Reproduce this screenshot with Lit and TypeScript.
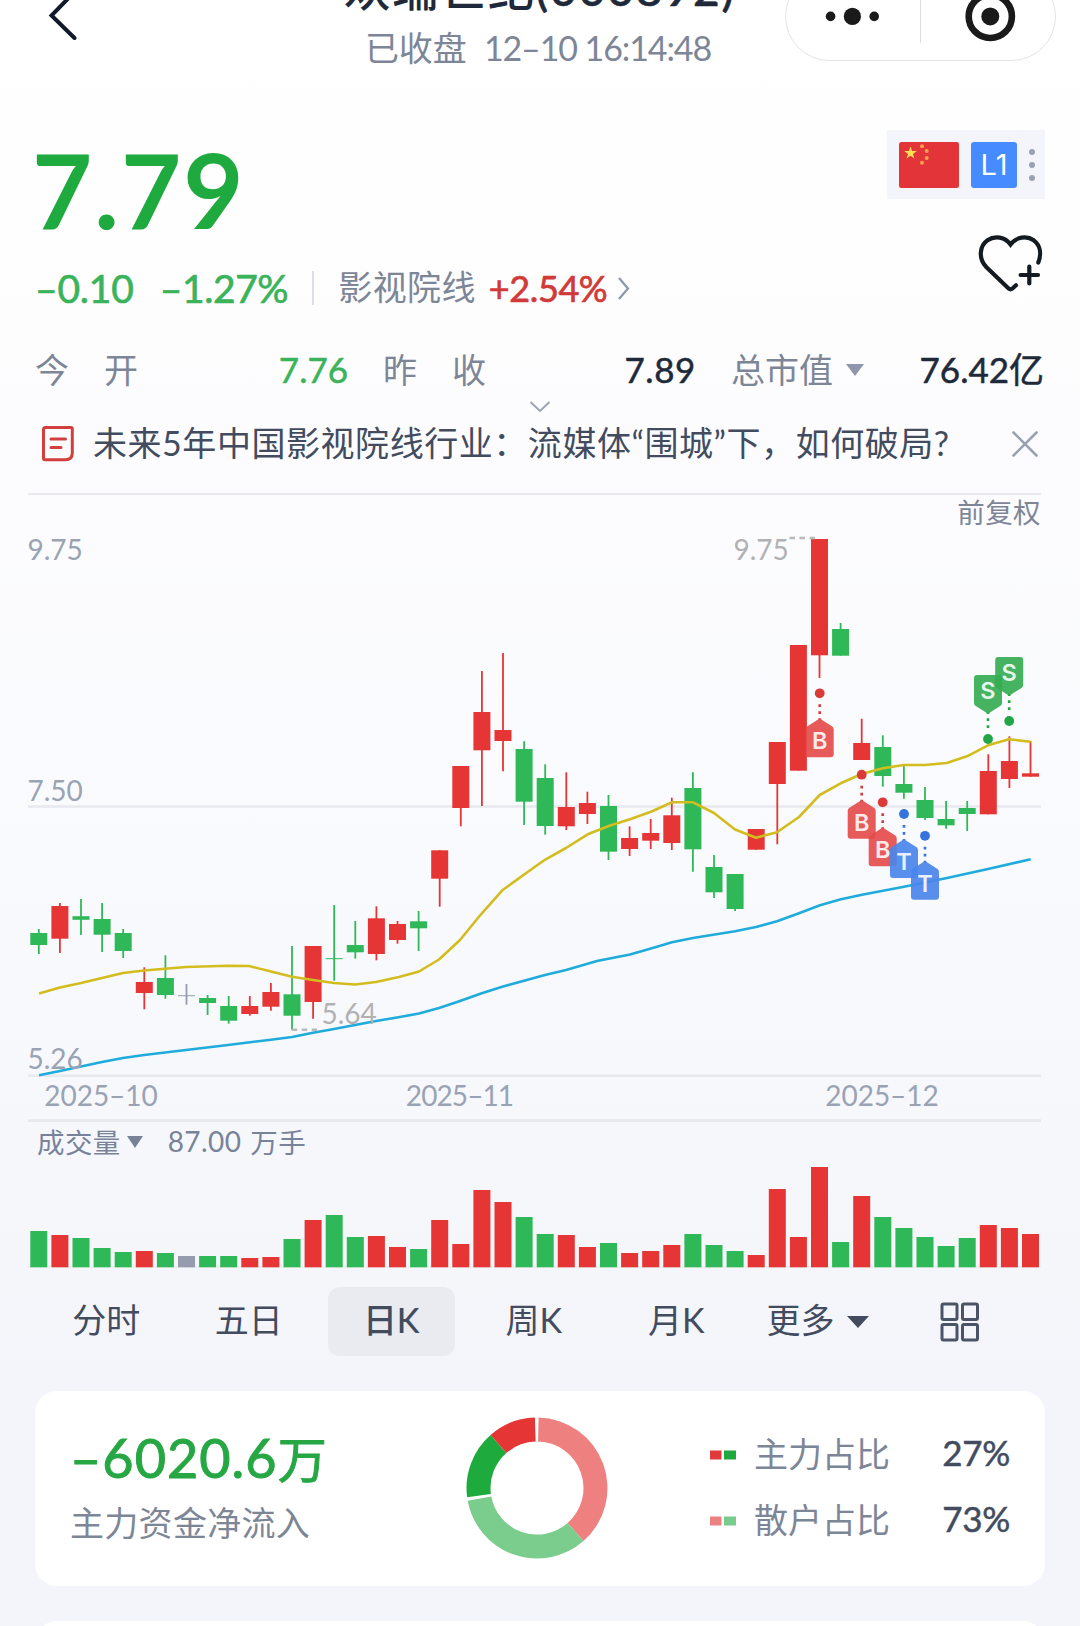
import { LitElement, html, svg, css } from "lit";
import { customElement } from "lit/decorators.js";

type Tone = "r" | "g" | "n";
/** tone, high, body top, body bottom, low, volume bar height */
type Candle = [Tone, number, number, number, number, number];

const RED = "#e53535";
const GREEN = "#2fb857";
const GREY = "#959cae";
const toneColor = (t: Tone) => (t === "r" ? RED : t === "g" ? GREEN : GREY);

const CANDLES: Candle[] = [
  ["g", 928, 932, 944, 953, 36],
  ["r", 902, 905, 937.7, 952, 32],
  ["g", 898, 915.2, 918.8, 934, 29],
  ["g", 902, 918, 933.7, 951, 19],
  ["g", 928, 932, 950, 957, 15],
  ["r", 966.3, 981, 992, 1008.3, 16],
  ["g", 954.3, 977, 994, 997.7, 14],
  ["n", 983, 994.2, 995.2, 1003.7, 11],
  ["g", 994, 997, 1002, 1014, 11],
  ["g", 995, 1005, 1019.7, 1022.7, 11],
  ["r", 995, 1005, 1013, 1014.7, 9],
  ["r", 982, 991, 1005.7, 1009.7, 10],
  ["g", 945, 993.3, 1014.7, 1028.7, 28],
  ["r", 945, 945, 1001, 1017.7, 47],
  ["g", 904, 957.2, 958.2, 979.7, 52],
  ["g", 920, 944, 951.3, 957.7, 30],
  ["r", 905.3, 917.3, 953, 959.3, 31],
  ["r", 920, 923, 939, 942.7, 20],
  ["g", 910, 920.3, 927.3, 950, 18],
  ["r", 849.3, 849.3, 877.7, 905.7, 47],
  ["r", 765, 765, 807, 825.3, 23],
  ["r", 670, 711, 749.3, 805, 77],
  ["r", 652, 729, 740, 770.3, 65],
  ["g", 740.3, 748, 800.7, 824, 50],
  ["g", 763.3, 777, 825, 833.7, 33],
  ["r", 771.3, 806, 825.3, 829, 32],
  ["r", 790.7, 802, 813, 823, 20],
  ["g", 794, 805, 850.7, 859, 24],
  ["r", 825.3, 837, 848, 855, 14],
  ["r", 818, 832, 839.7, 848, 16],
  ["r", 796.7, 814.3, 842, 849, 22],
  ["g", 771.3, 787, 848.3, 870.7, 33],
  ["g", 854, 866, 891.3, 897, 22],
  ["g", 873, 873, 908, 910, 16],
  ["r", 828, 828, 848.7, 848.7, 12],
  ["r", 741, 741, 783, 843.3, 78],
  ["r", 644, 644, 769.7, 769.7, 30],
  ["r", 538, 538, 654.3, 677, 100],
  ["g", 622, 628, 654.7, 654.7, 25],
  ["r", 717.7, 742, 759, 759, 71],
  ["g", 734.3, 746, 775, 785.7, 50],
  ["g", 764.3, 783, 791.7, 797.7, 39],
  ["g", 786, 799, 817, 819, 30],
  ["g", 800, 818, 824.3, 827.7, 21],
  ["g", 800, 807, 813, 830, 29],
  ["r", 753.3, 770, 813.3, 813.3, 42],
  ["r", 735.3, 760, 778, 787, 39],
  ["r", 740, 772.3, 775.7, 775.7, 33],
];

const FIRST_X = 38.8;
const STEP = 21.1;
const candleX = (i: number) => FIRST_X + i * STEP;

const MA_FAST =
  "39,992.5 60,986.5 81,982 102,977 123,972 144,969.5 186,966 228,964.7 249,965 271,970.5 292,975.7 313,979 334,982 355,983.5 376,981 399,976 419,970.5 439,958.5 460,939 481,913.3 502.3,889.3 535,865.7 545.7,858.3 566,847 587.7,833.3 608.7,825 630,818.3 651,810.7 672,801.3 693,801.3 714,812 735,828.5 756,836.7 777,831.3 799,816 819.7,794 840.7,782.3 861.7,773 882.7,767.3 904,764 925,764 946.7,762 967,755.3 988,744.3 1009,738.3 1030.7,740.7";
const MA_SLOW =
  "39,1074.3 60,1070 81,1065.5 102,1061 123,1057 144,1054 186,1049 228,1044 271,1038.7 292,1036 313,1031.7 334,1028 355,1024 376,1020 397,1016.5 419,1012.5 439,1007 460,1000 481,992.5 503,985.5 545,974 566,969 597,960 630,953.5 651,947.5 672,941.3 693,937 735,930.3 756,926 777,920.3 799,912.3 820,904.3 841,898.3 862,893.7 904,885.7 947,877 988,868 1030.7,858.3";

interface Marker {
  x: number;
  y: number;
  letter: "B" | "S" | "T";
}
const MARKERS: Marker[] = [
  { x: 819.7, y: 692.3, letter: "B" },
  { x: 861.7, y: 773.7, letter: "B" },
  { x: 882.7, y: 801.3, letter: "B" },
  { x: 904, y: 813, letter: "T" },
  { x: 925, y: 834.8, letter: "T" },
  { x: 988, y: 738, letter: "S" },
  { x: 1009.2, y: 720, letter: "S" },
];
const MARKER_COLORS = {
  B: ["#d93a3a", "#e54c4c"],
  T: ["#3673dc", "#4a85ec"],
  S: ["#22a544", "#35ad52"],
};

const base = css`
  :host {
    display: block;
    font-family: Lato, "Noto Sans CJK SC", sans-serif;
  }
  svg {
    display: block;
    flex: none;
  }
`;

@customElement("stock-header")
export class StockHeader extends LitElement {
  static styles = [
    base,
    css`
      .bar {
        display: grid;
        grid-template-columns: 290px 1fr 295px;
        height: 130px;
        overflow: hidden;
      }
      .back {
        margin-left: 45px;
      }
      .titles {
        text-align: center;
        white-space: nowrap;
      }
      .title {
        margin: -36px -5px 0 0;
        font-size: 46px;
        line-height: 50px;
        letter-spacing: 1.9px;
        font-weight: 500;
        color: #20293a;
      }
      .digits {
        -webkit-text-stroke: 0.6px currentColor;
      }
      .sub {
        margin: 14px -1px 0 0;
        font-size: 34px;
        line-height: 40px;
        color: #7d8697;
      }
      .date {
        margin-left: 17px;
        letter-spacing: -1.1px;
      }
      .capsule {
        box-sizing: border-box;
        width: 271px;
        height: 89px;
        margin-top: -28px;
        border: 1px solid #e4e4e6;
        border-radius: 45px;
        background: #fff;
      }
    `,
  ];
  render() {
    return html`<header class="bar">
      <svg class="back" width="40" height="44" viewBox="45 0 40 44">
        <path d="M74.5 -8 L51.5 15.5 L74.5 38" fill="none" stroke="#111a2b" stroke-width="4" stroke-linecap="round" />
      </svg>
      <div class="titles">
        <div class="title">欢瑞世纪<span class="digits">(000892)</span></div>
        <div class="sub">已收盘<span class="date">12–10 16:14:48</span></div>
      </div>
      <div class="capsule">
        <svg width="269" height="87" viewBox="786 -27 269 87">
          <g fill="#1a1a1a">
            <circle cx="830.6" cy="16.4" r="4.8" />
            <circle cx="852.4" cy="16.4" r="8.6" />
            <circle cx="874.2" cy="16.4" r="4.8" />
            <circle cx="990.3" cy="16.4" r="9" />
          </g>
          <path d="M920.5 -10V43" stroke="#dcdcde" stroke-width="1" />
          <circle cx="990.3" cy="16.4" r="21.6" fill="none" stroke="#1a1a1a" stroke-width="6.6" />
        </svg>
      </div>
    </header>`;
  }
}

@customElement("stock-quote")
export class StockQuote extends LitElement {
  static styles = [
    base,
    css`
      .quote {
        display: flex;
        justify-content: space-between;
        padding: 0 35px;
        height: 198px;
      }
      .price {
        margin-left: -3px;
        font-size: 104px;
        line-height: 117px;
        font-weight: 700;
        letter-spacing: 2px;
        color: #1eaa3e;
      }
      .change {
        display: flex;
        align-items: center;
        height: 81px;
        font-size: 39px;
        letter-spacing: -0.2px;
        -webkit-text-stroke: 0.7px currentColor;
        color: #3bb35b;
        white-space: nowrap;
      }
      .pct {
        margin-left: 26px;
        letter-spacing: -0.4px;
      }
      .divider {
        width: 2px;
        height: 34px;
        margin: 0 24px;
        background: #dcdfe5;
      }
      .sector {
        font-size: 34px;
        font-weight: 400;
        color: #7d8697;
        letter-spacing: 0.4px;
        line-height: 50px;
        padding-bottom: 2px;
        -webkit-text-stroke: 0;
      }
      .sector-pct {
        margin: 0 10px 0 13px;
        font-size: 36px;
        letter-spacing: -0.4px;
        color: #d03b39;
      }
      .side {
        display: flex;
        flex-direction: column;
        align-items: flex-end;
      }
      .badges {
        display: flex;
        align-items: center;
        gap: 12px;
        box-sizing: border-box;
        width: 158px;
        height: 69px;
        padding-left: 12px;
        background: #f4f5fa;
      }
      .level {
        width: 46px;
        height: 46px;
        border-radius: 3px;
        background: #468bff;
        color: #fff;
        font: 400 29px/46px Inter, sans-serif;
        text-align: center;
      }
      .heart {
        margin: 33px 0 0;
      }
      .stats {
        display: grid;
        grid-template-columns: 313px 313px 313px;
        column-gap: 35px;
        padding: 0 36px 0 35px;
        margin-top: 8px;
        font-size: 34px;
        line-height: 67px;
        color: #7d8697;
      }
      .stat {
        display: flex;
        justify-content: space-between;
        align-items: center;
        white-space: nowrap;
      }
      .wide {
        display: flex;
        gap: 35px;
      }
      .value {
        color: #20293a;
        -webkit-text-stroke: 0.5px currentColor;
        font-size: 35px;
      }
      .prev {
        letter-spacing: 0.6px;
      }
      .up {
        color: #3bb35b;
      }
      .cap {
        display: flex;
        align-items: center;
        gap: 13px;
      }
      .expand {
        margin: -2px auto 0;
      }
    `,
  ];
  render() {
    return html`
      <section class="quote">
        <div>
          <div class="price">7.79</div>
          <div class="change">
            <span>–0.10</span><span class="pct">–1.27%</span>
            <span class="divider"></span>
            <span class="sector">影视院线</span><span class="sector-pct">+2.54%</span>
            <svg width="14" height="26" viewBox="0 0 14 26">
              <path d="M2 3 L11 13.5 L2 24" fill="none" stroke="#8d96a6" stroke-width="2.2" />
            </svg>
          </div>
        </div>
        <div class="side">
          <div class="badges">
            <svg width="60" height="46" viewBox="899 141 60 46">
              <rect x="899" y="141" width="60" height="46" rx="2.5" fill="#e33539" />
              <path
                d="M910.5 145.6 l1.6 4.5 h4.7 l-3.8 2.8 1.4 4.6 -3.9 -2.7 -3.9 2.7 1.4 -4.6 -3.8 -2.8 h4.7z"
                fill="#ffdd55"
              />
              <g fill="#f5a04a">
                <circle cx="922" cy="145.3" r="2" />
                <circle cx="926.7" cy="150" r="2" />
                <circle cx="926.7" cy="157" r="2" />
                <circle cx="922" cy="161.7" r="2" />
              </g>
            </svg>
            <div class="level">L1</div>
            <svg width="8" height="34" viewBox="0 0 8 34">
              <g fill="#9aa1b1">
                <circle cx="3" cy="4" r="3" />
                <circle cx="3" cy="17" r="3" />
                <circle cx="3" cy="30" r="3" />
              </g>
            </svg>
          </div>
          <svg class="heart" width="68" height="62" viewBox="977 232 68 62">
            <g fill="none" stroke="#141a22" stroke-width="4.2" stroke-linecap="round">
              <path
                d="M1016 285.3 L1012.2 288.7 Q1010.5 290 1008.8 288.7 L986.5 267.3 C978 258.5 979.5 246 987.5 240.3 C995 235.2 1005 237 1010.5 244.5 C1016 237 1026.5 235.2 1033.8 240.3 C1040.5 245.4 1041.5 254 1038.3 262.5"
              />
              <path d="M1029.3 266.5v17M1020.6 275h17.4" />
            </g>
          </svg>
        </div>
      </section>
      <section class="stats">
        <div class="stat">
          <span class="wide"><span>今</span><span>开</span></span><span class="value up">7.76</span>
        </div>
        <div class="stat">
          <span class="wide"><span>昨</span><span>收</span></span><span class="value prev">7.89</span>
        </div>
        <div class="stat">
          <span class="cap"
            >总市值<svg width="18" height="12" viewBox="0 0 18 12"><path d="M0 0H18L9 12Z" fill="#8d96ab" /></svg></span
          ><span class="value">76.42亿</span>
        </div>
      </section>
      <svg class="expand" width="22" height="12" viewBox="0 0 22 12">
        <path d="M1.5 1 L11 10 L20.5 1" fill="none" stroke="#99a1b3" stroke-width="1.8" />
      </svg>
    `;
  }
}

@customElement("stock-news")
export class StockNews extends LitElement {
  static styles = [
    base,
    css`
      .news {
        display: flex;
        align-items: center;
        height: 62px;
        margin: 0 39px 0 28px;
        padding: 0 3px 18px 13px;
        border-bottom: 2px solid #e8eaee;
      }
      .text {
        flex: 1;
        margin-left: 18px;
        padding-bottom: 3px;
        font-size: 34px;
        line-height: 59px;
        letter-spacing: 0.55px;
        color: #424c5e;
        white-space: nowrap;
      }
    `,
  ];
  render() {
    return html`<div class="news">
      <svg width="34" height="38" viewBox="41 425 34 38">
        <g fill="none" stroke="#d33f3f" stroke-width="3" stroke-linecap="round">
          <path d="M45.5 427.5 H70.8 Q72.3 427.5 72.3 429 V453 Q72.3 459.7 65.5 459.7 H45 Q43.5 459.7 43.5 458.2 V429.5 Q43.5 427.5 45.5 427.5Z" />
          <path d="M51 439H65.5M51 447.5H61" />
        </g>
      </svg>
      <span class="text">未来5年中国影视院线行业：流媒体“围城”下，如何破局?</span>
      <svg width="26" height="26" viewBox="0 0 26 26">
        <path d="M1.5 1.5L24.5 24.5M24.5 1.5L1.5 24.5" stroke="#99a1b3" stroke-width="2.6" stroke-linecap="round" />
      </svg>
    </div>`;
  }
}

@customElement("kline-chart")
export class KlineChart extends LitElement {
  static styles = [
    base,
    css`
      .axis {
        font-size: 28px;
        fill: #9aa3b4;
      }
      .tight {
        letter-spacing: -0.9px;
      }
      .extreme {
        font-size: 28px;
        fill: #b1b1b3;
      }
      .adjust {
        font-size: 27.5px;
        fill: #7d8697;
        letter-spacing: 0.4px;
      }
      .letter {
        font: 600 23.5px Inter, "Liberation Sans", sans-serif;
        fill: #fff;
        fill-opacity: 0.88;
        text-anchor: middle;
      }
      .legend {
        display: flex;
        align-items: center;
        box-sizing: border-box;
        height: 39px;
        padding: 0 0 2px 37px;
        font-size: 27.5px;
        letter-spacing: 0.4px;
        color: #78839a;
      }
      .arrow {
        margin: 3px 25px 0 6px;
      }
      .vol {
        font-size: 28px;
      }
      .unit {
        margin-left: 9px;
      }
    `,
  ];

  private candle([tone, high, top, bottom, low]: Candle, i: number) {
    const x = candleX(i);
    const c = toneColor(tone);
    return svg`<path d="M${x} ${high}V${low}" stroke=${c} stroke-width="1.8" />
      <rect x=${x - 8.5} y=${top} width="17" height=${bottom - top} fill=${c} />`;
  }

  private marker({ x, y, letter }: Marker) {
    const [dot, fill] = MARKER_COLORS[letter];
    const d = letter === "S" ? -1 : 1;
    const apex = y + 25.3 * d;
    const shoulder = apex + 9 * d;
    const end = y + 64 * d;
    return svg`<circle cx=${x} cy=${y} r="4.9" fill=${dot} />
      <path d="M${x} ${y + 11 * d}V${apex + 2 * d}" stroke=${dot} stroke-width="2.6" stroke-dasharray="2.8 4.2" />
      <path d="M${x} ${apex}L${x + 12.6} ${shoulder - d}Q${x + 14} ${shoulder} ${x + 14} ${shoulder + 2 * d}V${end - 3 * d}Q${x + 14} ${end} ${x + 11} ${end}H${x - 11}Q${x - 14} ${end} ${x - 14} ${end - 3 * d}V${shoulder + 2 * d}Q${x - 14} ${shoulder} ${x - 12.6} ${shoulder - d}Z"
        fill=${fill} fill-opacity="0.92" />
      <text class="letter" x=${x} y=${(shoulder + end) / 2 + (d > 0 ? 7 : 9.5)}>${letter}</text>`;
  }

  render() {
    return html`
      <svg width="1080" height="627" viewBox="0 494 1080 627">
        <g stroke="#e7e9ee" stroke-width="2.6">
          <path d="M28 805.5H1041M28 1074.7H1041M28 1119.6H1041" />
        </g>
        ${CANDLES.map((c, i) => this.candle(c, i))}
        <polyline points=${MA_FAST} fill="none" stroke="#d3bd1e" stroke-width="2.6" stroke-linejoin="round" />
        <polyline points=${MA_SLOW} fill="none" stroke="#1fabdc" stroke-width="2.6" stroke-linejoin="round" />
        <g stroke="#b9b9bb" stroke-width="2.6" stroke-dasharray="5.5 4.5">
          <path d="M789.5 537H815M291.7 1028.7H317" />
        </g>
        <g class="axis">
          <text x="27.5" y="559.3">9.75</text>
          <text x="27.5" y="800.3">7.50</text>
          <text x="27.5" y="1068">5.26</text>
          <text x="101" y="1105" text-anchor="middle">2025–10</text>
          <text class="tight" x="459.5" y="1105" text-anchor="middle">2025–11</text>
          <text x="882" y="1105" text-anchor="middle">2025–12</text>
        </g>
        <g class="extreme">
          <text x="733.5" y="559.3">9.75</text>
          <text x="321.5" y="1023">5.64</text>
        </g>
        <text class="adjust" x="1041" y="521.7" text-anchor="end">前复权</text>
        ${MARKERS.map((m) => this.marker(m))}
      </svg>
      <div class="legend">
        <span>成交量</span>
        <svg class="arrow" width="16" height="12" viewBox="0 0 16 12"><path d="M0 0H16L8 12Z" fill="#78839a" /></svg>
        <span class="vol">87.00</span><span class="unit">万手</span>
      </div>
      <svg width="1080" height="108" viewBox="0 1160 1080 108">
        <path d="M28 1266H1041" stroke="#e9ecef" stroke-width="1.5" />
        ${CANDLES.map(
          ([tone, , , , , v], i) =>
            svg`<rect x=${candleX(i) - 8.5} y=${1266 - v} width="17" height=${v + 0.3} fill=${toneColor(tone)} />`,
        )}
      </svg>
    `;
  }
}

@customElement("period-tabs")
export class PeriodTabs extends LitElement {
  static styles = [
    base,
    css`
      .tabs {
        display: flex;
        align-items: center;
        height: 69px;
        margin-top: 18px;
        padding-left: 35px;
        font-size: 34px;
        color: #424c5e;
      }
      .cell {
        width: 142.5px;
        display: flex;
        justify-content: center;
      }
      .tab {
        box-sizing: border-box;
        width: 127px;
        height: 69px;
        line-height: 66px;
        text-align: center;
        border-radius: 12px;
      }
      .active {
        background: #e9ebf0;
        font-weight: 500;
      }
      .more {
        display: flex;
        align-items: center;
        gap: 12px;
        margin-left: 19px;
        width: 173px;
        line-height: 66px;
      }
      .word {
        padding-bottom: 3px;
      }
    `,
  ];
  render() {
    return html`<nav class="tabs">
      ${["分时", "五日", "日K", "周K", "月K"].map(
        (t) => html`<div class="cell"><div class="tab ${t === "日K" ? "active" : ""}">${t}</div></div>`,
      )}
      <div class="more">
        <span class="word">更多</span
        ><svg width="22" height="12" viewBox="0 0 22 12"><path d="M0 0H22L11 12Z" fill="#424c5e" /></svg>
      </div>
      <svg width="40" height="40" viewBox="0 0 40 40">
        <g fill="none" stroke="#4a5466" stroke-width="3">
          <rect x="2" y="2" width="15" height="15.5" rx="1.5" />
          <rect x="22.5" y="2" width="15" height="15.5" rx="1.5" />
          <rect x="2" y="22.5" width="15" height="15.5" rx="1.5" />
          <rect x="22.5" y="22.5" width="15" height="15.5" rx="1.5" />
        </g>
      </svg>
    </nav>`;
  }
}

@customElement("fund-flow")
export class FundFlow extends LitElement {
  static styles = [
    base,
    css`
      .card {
        display: grid;
        grid-template-columns: 431px 244px 1fr;
        box-sizing: border-box;
        height: 195px;
        margin: 35px 35px 0;
        border-radius: 22px;
        background: #fff;
      }
      .flow {
        padding: 33px 0 0 35px;
        white-space: nowrap;
      }
      .amount {
        font-size: 54px;
        line-height: 68px;
        letter-spacing: 1px;
        -webkit-text-stroke: 1px currentColor;
        color: #27a744;
      }
      .wan {
        font-size: 49px;
      }
      .label {
        font-size: 34px;
        line-height: 60px;
        color: #7d8697;
        letter-spacing: 0.3px;
      }
      .donut {
        margin-top: 26px;
      }
      .rows {
        padding: 28px 35px 0 0;
      }
      .row {
        display: flex;
        align-items: center;
        height: 66px;
        font-size: 34px;
        color: #7d8697;
      }
      .key {
        margin-top: 5px;
      }
      .name {
        flex: 1;
        margin-left: 18px;
      }
      .ratio {
        font-size: 35px;
        letter-spacing: -0.3px;
        -webkit-text-stroke: 0.5px currentColor;
        color: #424c5e;
      }
      .next {
        height: 100px;
        margin: 35px 35px 0;
        border-radius: 22px;
        background: #fff;
      }
    `,
  ];

  private arc(from: number, to: number, color: string) {
    const R = 70.5;
    const r = 46.5;
    const p = (a: number, q: number) => {
      const t = (a * Math.PI) / 180;
      return `${71 + q * Math.sin(t)} ${71 - q * Math.cos(t)}`;
    };
    return svg`<path fill=${color} d="M${p(from, R)}A${R} ${R} 0 0 1 ${p(to, R)}L${p(to, r)}A${r} ${r} 0 0 0 ${p(from, r)}Z" />`;
  }

  private legend(name: string, ratio: string, a: string, b: string) {
    return html`<div class="row">
      <svg class="key" width="26" height="10" viewBox="0 0 26 10">
        <rect y="0.5" width="11.5" height="9" fill=${a} />
        <rect x="14" y="0.5" width="12" height="9" fill=${b} />
      </svg>
      <span class="name">${name}</span><span class="ratio">${ratio}</span>
    </div>`;
  }

  render() {
    return html`
      <section class="card">
        <div class="flow">
          <div class="amount">–6020.6<span class="wan">万</span></div>
          <div class="label">主力资金净流入</div>
        </div>
        <svg class="donut" width="142" height="142" viewBox="0 0 142 142">
          ${this.arc(1.3, 138.8, "#ee8080")} ${this.arc(138.8, 259.5, "#7acd8c")}
          ${this.arc(262.5, 318.8, "#1eaa3c")} ${this.arc(318.8, 358.3, "#e53535")}
        </svg>
        <div class="rows">
          ${this.legend("主力占比", "27%", "#e03a3a", "#1fa83f")}
          ${this.legend("散户占比", "73%", "#ea8282", "#79cc8c")}
        </div>
      </section>
      <section class="next"></section>
    `;
  }
}

@customElement("app-root")
export class AppRoot extends LitElement {
  static styles = css`
    :host {
      display: block;
    }
    .page {
      width: 1080px;
      height: 1626px;
      overflow: hidden;
      background: linear-gradient(#ffffff 0, #fefefe 200px, #fcfcfe 480px, #f9fafd 860px, #f6f7fb 1180px, #f4f5fa 1380px);
    }
  `;
  render() {
    return html`<main class="page">
      <stock-header></stock-header>
      <stock-quote></stock-quote>
      <stock-news></stock-news>
      <kline-chart></kline-chart>
      <period-tabs></period-tabs>
      <fund-flow></fund-flow>
    </main>`;
  }
}
